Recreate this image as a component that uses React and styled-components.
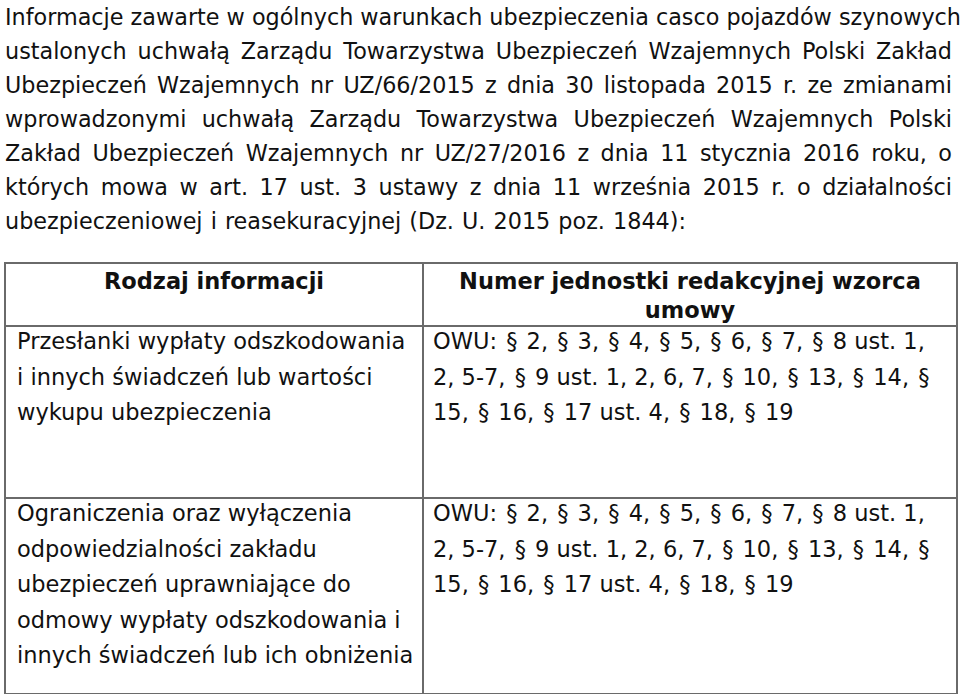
import React from "react";
import styled, { createGlobalStyle } from "styled-components";

const GlobalStyle = createGlobalStyle`
  html, body {
    margin: 0;
    padding: 0;
    background: #ffffff;
  }
  body {
    font-family: "DejaVu Sans", Verdana, sans-serif;
    color: #111111;
  }
`;

const Page = styled.div`
  width: 960px;
  height: 694px;
  overflow: hidden;
  padding: 0 4px;
  box-sizing: border-box;
`;

const Intro = styled.div`
  padding: 0 4px 0 1px;
  font-size: 22.3px;
  line-height: 34px;
`;

const IntroLine = styled.span`
  display: block;
  white-space: nowrap;
  text-align: justify;
  text-align-last: ${(p) => (p.$last ? "left" : "justify")};
  word-spacing: ${(p) => (p.$last ? "1px" : "0")};
`;

const Table = styled.table`
  margin-top: 24px;
  width: 952px;
  border-collapse: collapse;
  table-layout: fixed;
  font-size: 22.5px;
`;

const Row = styled.tr`
  height: ${(p) => p.$height}px;
`;

const HeadCell = styled.th`
  border: 2px solid #6a6a6a;
  padding: 3px 10px 0;
  vertical-align: top;
  text-align: center;
  font-weight: bold;
  line-height: 29px;
`;

const Cell = styled.td`
  border: 2px solid #6a6a6a;
  padding: 0 4px 0 ${(p) => (p.$wide ? 9 : 11)}px;
  vertical-align: top;
  text-align: left;
  line-height: 35.5px;
`;

const CellText = styled.div`
  margin-top: -3px;
  white-space: nowrap;
`;

const Sect = styled.span`
  margin: 0 2px;
`;

const introLines = [
  "Informacje zawarte w ogólnych warunkach ubezpieczenia casco pojazdów szynowych",
  "ustalonych uchwałą Zarządu Towarzystwa Ubezpieczeń Wzajemnych Polski Zakład",
  "Ubezpieczeń Wzajemnych nr UZ/66/2015 z dnia 30 listopada 2015 r. ze zmianami",
  "wprowadzonymi uchwałą Zarządu Towarzystwa Ubezpieczeń Wzajemnych Polski",
  "Zakład Ubezpieczeń Wzajemnych nr UZ/27/2016 z dnia 11 stycznia 2016 roku, o",
  "których mowa w art. 17 ust. 3 ustawy z dnia 11 września 2015 r. o działalności",
  "ubezpieczeniowej i reasekuracyjnej (Dz. U. 2015 poz. 1844):",
];

const refLines = [
  "OWU: § 2, § 3, § 4, § 5, § 6, § 7, § 8 ust. 1,",
  "2, 5-7, § 9 ust. 1, 2, 6, 7, § 10, § 13, § 14, §",
  "15, § 16, § 17 ust. 4, § 18, § 19",
];

const rows = [
  {
    height: 172,
    kind: [
      "Przesłanki wypłaty odszkodowania",
      "i innych świadczeń lub wartości",
      "wykupu ubezpieczenia",
    ],
  },
  {
    height: 196,
    kind: [
      "Ograniczenia oraz wyłączenia",
      "odpowiedzialności zakładu",
      "ubezpieczeń uprawniające do",
      "odmowy wypłaty odszkodowania i",
      "innych świadczeń lub ich obniżenia",
    ],
  },
];

// the § sign sits with wider gaps around it, as in the source document
const withSections = (line) =>
  line.split("§").map((part, i) => (
    <React.Fragment key={i}>
      {i > 0 && <Sect>§</Sect>}
      {part}
    </React.Fragment>
  ));

const Lines = ({ lines, render = (l) => l }) =>
  lines.map((line, i) => (
    <React.Fragment key={i}>
      {i > 0 && <br />}
      {render(line)}
    </React.Fragment>
  ));

const App = () => {
  return (
    <>
      <GlobalStyle />
      <Page>
        <Intro>
          {introLines.map((line, i) => (
            <IntroLine key={i} $last={i === introLines.length - 1}>
              {line}
            </IntroLine>
          ))}
        </Intro>
        <Table>
          <colgroup>
            <col style={{ width: 418 }} />
            <col style={{ width: 534 }} />
          </colgroup>
          <thead>
            <Row $height={62}>
              <HeadCell>Rodzaj informacji</HeadCell>
              <HeadCell>Numer jednostki redakcyjnej wzorca umowy</HeadCell>
            </Row>
          </thead>
          <tbody>
            {rows.map((row, i) => (
              <Row key={i} $height={row.height}>
                <Cell>
                  <CellText>
                    <Lines lines={row.kind} />
                  </CellText>
                </Cell>
                <Cell $wide>
                  <CellText>
                    <Lines lines={refLines} render={withSections} />
                  </CellText>
                </Cell>
              </Row>
            ))}
          </tbody>
        </Table>
      </Page>
    </>
  );
};

export default App;
